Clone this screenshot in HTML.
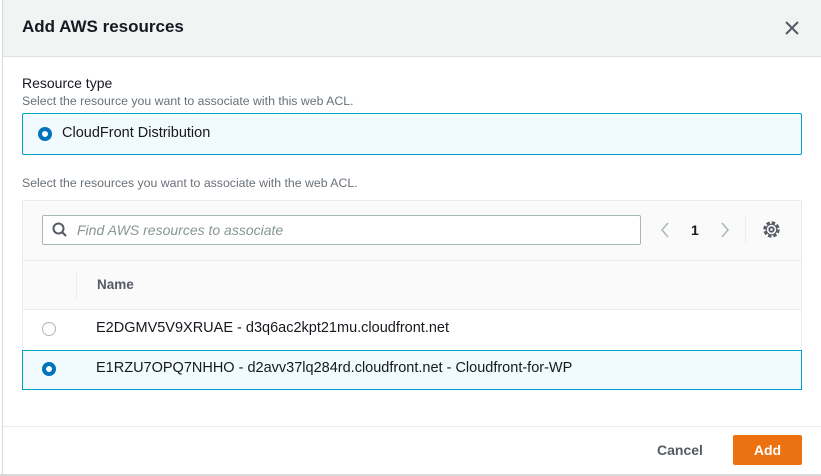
<!DOCTYPE html>
<html><head><style>
*{box-sizing:border-box;margin:0;padding:0}
body{width:821px;height:476px;overflow:hidden;background:#fff;font-family:"Liberation Sans",sans-serif;color:#16191f;position:relative}
.abs{position:absolute;white-space:nowrap}
.radio{position:absolute;width:14px;height:14px;border-radius:50%}
.on{border:4px solid #0073bb;background:#fff}
.off{border:1px solid #aab7b8;background:#fff}
</style></head><body>
<div class="abs" style="left:2px;top:0;width:1px;height:476px;background:#d5dbdb"></div>
<div class="abs" style="left:3px;top:0;width:818px;height:57px;background:#f2f3f3;border-bottom:1px solid #e0e0e0"></div>
<div class="abs" style="left:22px;top:17px;font-size:17px;font-weight:bold">Add AWS resources</div>
<svg class="abs" style="left:784px;top:20px" width="16" height="16"><path d="M2 2L14 14M14 2L2 14" stroke="#545b64" stroke-width="2"/></svg>
<div class="abs" style="left:22px;top:75px;font-size:14px">Resource type</div>
<div class="abs" style="left:22px;top:94px;font-size:12.3px;color:#687078">Select the resource you want to associate with this web ACL.</div>
<div class="abs" style="left:22px;top:113px;width:780px;height:42px;background:#f1faff;border:1px solid #00a1c9;border-radius:2px"></div>
<div class="radio on" style="left:38px;top:127px"></div>
<div class="abs" style="left:62px;top:125px;font-size:14.5px">CloudFront Distribution</div>
<div class="abs" style="left:22px;top:176px;font-size:12.3px;color:#687078">Select the resources you want to associate with the web ACL.</div>
<div class="abs" style="left:22px;top:200px;width:780px;height:190px;border:1px solid #eaeded;background:#fff"></div>
<div class="abs" style="left:23px;top:201px;width:778px;height:109px;background:#fafafa;border-bottom:1px solid #eaeded"></div>
<div class="abs" style="left:23px;top:260px;width:778px;height:1px;background:#eaeded"></div>
<div class="abs" style="left:42px;top:215px;width:599px;height:30px;background:#fff;border:1px solid #aab7b8;border-radius:2px"></div>
<svg class="abs" style="left:52px;top:222px" width="16" height="16"><circle cx="6.5" cy="6.5" r="5" fill="none" stroke="#545b64" stroke-width="2"/><path d="M10 10L14 14" stroke="#545b64" stroke-width="2"/></svg>
<div class="abs" style="left:77px;top:222px;font-size:14px;font-style:italic;color:#879596">Find AWS resources to associate</div>
<svg class="abs" style="left:660px;top:221px" width="10" height="18"><path d="M8 2L2 9L8 16" fill="none" stroke="#aab7b8" stroke-width="1.5"/></svg>
<div class="abs" style="left:691px;top:222px;font-size:14px;font-weight:bold">1</div>
<svg class="abs" style="left:720px;top:221px" width="10" height="18"><path d="M2 2L8 9L2 16" fill="none" stroke="#aab7b8" stroke-width="1.5"/></svg>
<div class="abs" style="left:745px;top:216px;width:1px;height:28px;background:#eaeded"></div>
<svg class="abs" style="left:762px;top:220px" width="19" height="19"><circle cx="9.5" cy="9.5" r="7" fill="none" stroke="#545b64" stroke-width="2.4" stroke-dasharray="3.5 2"/><circle cx="9.5" cy="9.5" r="5.3" fill="none" stroke="#545b64" stroke-width="1.2"/><circle cx="9.5" cy="9.5" r="2.2" fill="none" stroke="#545b64" stroke-width="1.8"/></svg>
<div class="abs" style="left:76px;top:272px;width:1px;height:26px;background:#eaeded"></div>
<div class="abs" style="left:97px;top:277px;font-size:13.5px;font-weight:bold;color:#545b64">Name</div>
<div class="radio off" style="left:42px;top:322px"></div>
<div class="abs" style="left:96px;top:320px;font-size:14.5px">E2DGMV5V9XRUAE - d3q6ac2kpt21mu.cloudfront.net</div>
<div class="abs" style="left:22px;top:350px;width:780px;height:40px;background:#f1faff;border:1px solid #00a1c9"></div>
<div class="radio on" style="left:42px;top:362px"></div>
<div class="abs" style="left:96px;top:360px;font-size:14.5px">E1RZU7OPQ7NHHO - d2avv37lq284rd.cloudfront.net - Cloudfront-for-WP</div>
<div class="abs" style="left:3px;top:426px;width:818px;height:1px;background:#eaeded"></div>
<div class="abs" style="left:657px;top:442px;font-size:14px;font-weight:bold;color:#545b64">Cancel</div>
<div class="abs" style="left:733px;top:435px;width:69px;height:30px;background:#ec7211;border-radius:2px;color:#fff;font-size:14px;font-weight:bold;text-align:center;line-height:30px">Add</div>
<div class="abs" style="left:0;top:474px;width:821px;height:2px;background:#d5dbdb"></div>
</body></html>
